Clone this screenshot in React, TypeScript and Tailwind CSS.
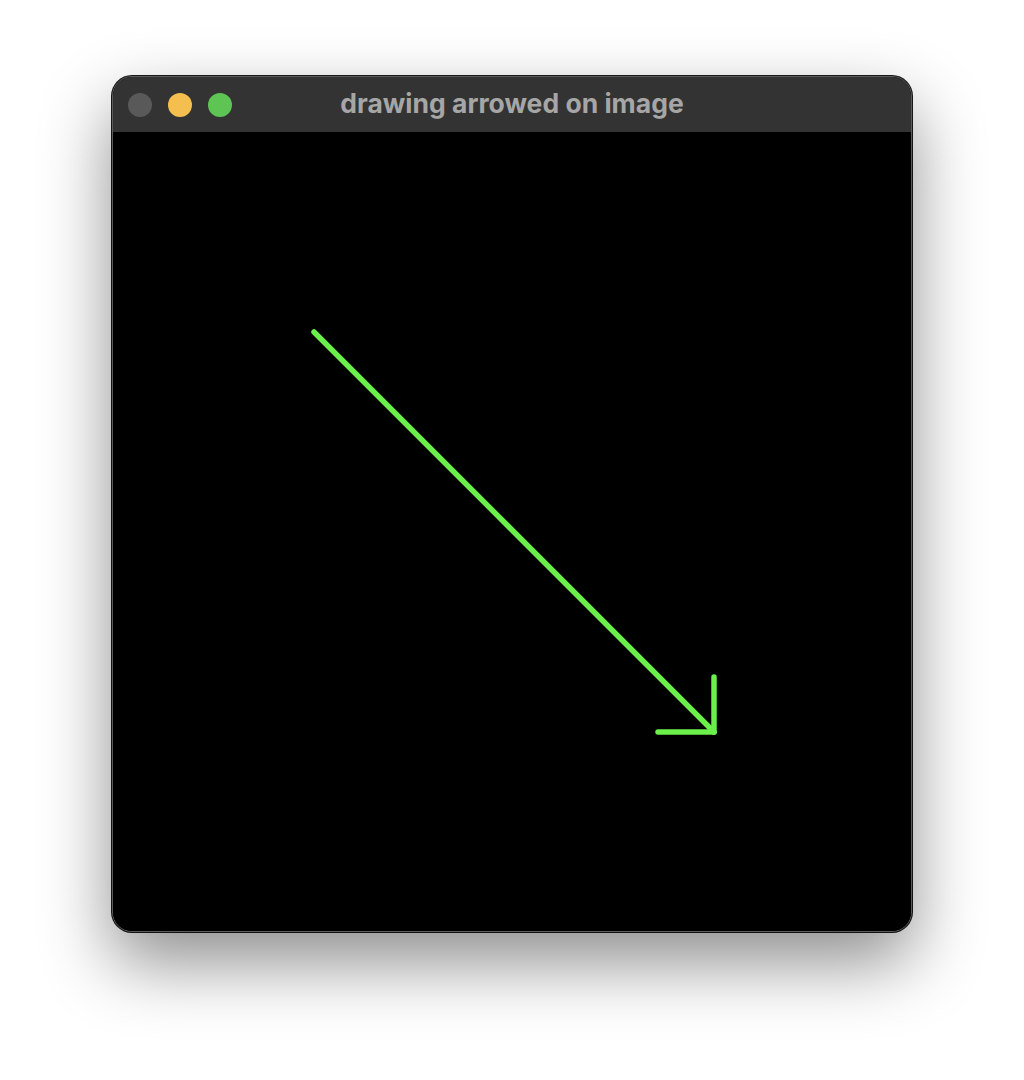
export default function App() {
  return (
    <div className="min-h-[1080px] w-[1024px] bg-white flex justify-center pt-[76px]">
      <div className="w-[800px] h-[856px] flex flex-col rounded-[20px] overflow-hidden bg-black border border-[#5c5c5c] shadow-[0_30px_70px_rgba(0,0,0,0.45),0_0_0_1px_#1a1a1a]">
        <div className="relative h-[55px] shrink-0 bg-[#333333] flex items-center">
          <div className="flex items-center gap-4 pl-[15px]">
            <span className="w-6 h-6 rounded-full bg-[#595959]" />
            <span className="w-6 h-6 rounded-full bg-[#f5bf4f]" />
            <span className="w-6 h-6 rounded-full bg-[#5ec453]" />
          </div>
          <div className="absolute inset-0 flex items-center justify-center pb-[2px] pointer-events-none">
            <span className="text-[26.5px] font-bold text-[#a6a6a6] tracking-[0px] font-['Inter','Liberation_Sans',sans-serif]">
              drawing arrowed on image
            </span>
          </div>
        </div>
        <div className="flex-1 bg-black">
          <svg width="800" height="800" viewBox="0 0 800 800">
            <g stroke="#6bef4b" strokeWidth="5.5" strokeLinecap="round" fill="none">
              <line x1="201" y1="200" x2="601" y2="600" />
              <line x1="601" y1="545" x2="601" y2="600" />
              <line x1="545" y1="600" x2="601" y2="600" />
            </g>
          </svg>
        </div>
      </div>
    </div>
  );
}
